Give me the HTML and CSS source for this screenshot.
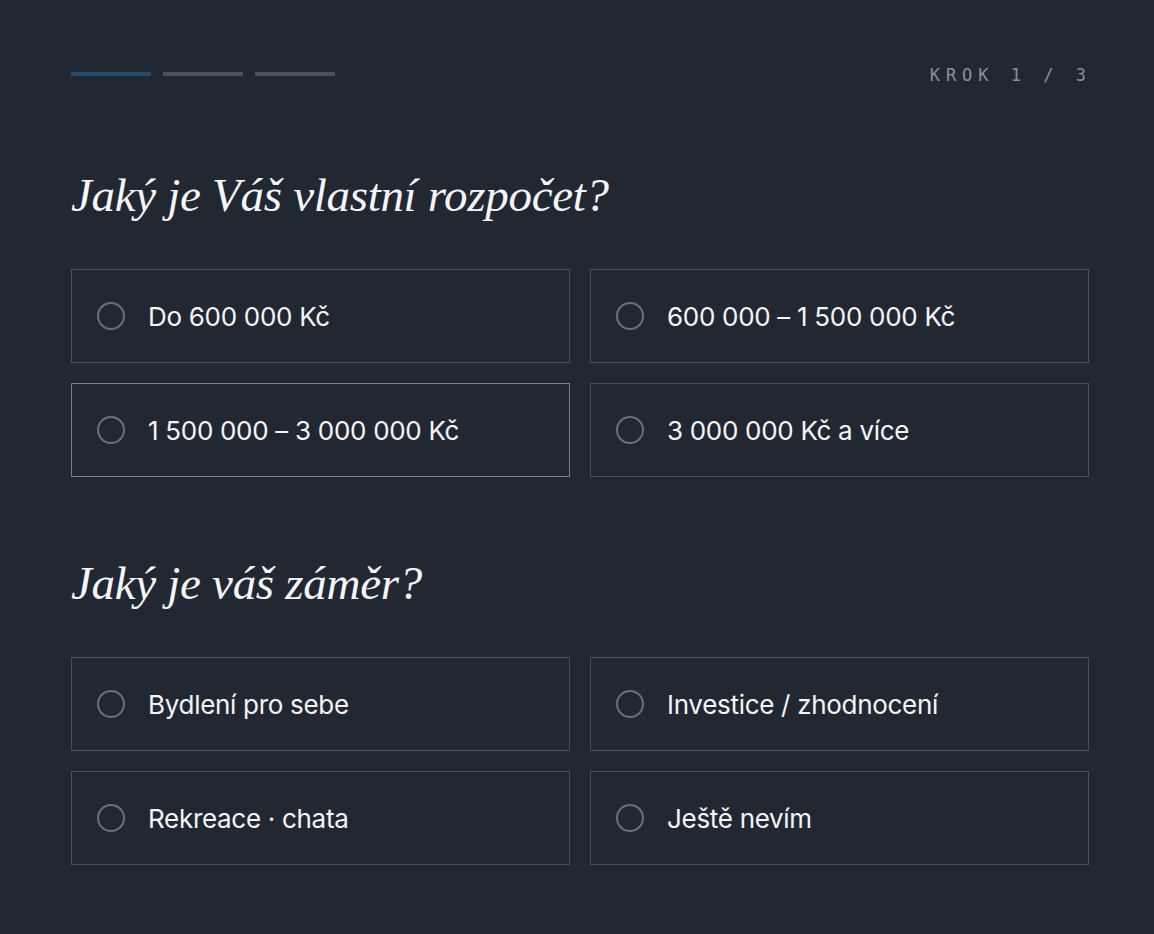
FILE: index.html
```html
<!DOCTYPE html>
<html lang="cs">
<head>
    <meta charset="UTF-8">
    <meta name="viewport" content="width=device-width, initial-scale=1.0">
    <title>Poptávka</title>
    <link rel="stylesheet" href="styles.css">
</head>
<body>
    <div class="quiz">
        <div class="quiz-top">
            <div class="steps">
                <span class="step active"></span>
                <span class="step"></span>
                <span class="step"></span>
            </div>
            <span class="step-label">KROK 1 / 3</span>
        </div>

        <section class="question">
            <h2>Jaký je Váš vlastní rozpočet?</h2>
            <div class="options">
                <label class="option"><span class="radio"></span>Do 600 000 Kč</label>
                <label class="option"><span class="radio"></span>600 000 – 1 500 000 Kč</label>
                <label class="option hover"><span class="radio"></span>1 500 000 – 3 000 000 Kč</label>
                <label class="option"><span class="radio"></span>3 000 000 Kč a více</label>
            </div>
        </section>

        <section class="question">
            <h2>Jaký je váš záměr?</h2>
            <div class="options">
                <label class="option"><span class="radio"></span>Bydlení pro sebe</label>
                <label class="option"><span class="radio"></span>Investice / zhodnocení</label>
                <label class="option"><span class="radio"></span>Rekreace · chata</label>
                <label class="option"><span class="radio"></span>Ještě nevím</label>
            </div>
        </section>
    </div>
</body>
</html>
```

FILE: styles.css
```css
:root {
    --color-bg: #222831;
    --color-line: #4b5159;
    --color-line-hover: #7a7f87;
    --color-accent: #264b6d;
    --color-text: #f4f5f7;
    --color-muted: #8b9098;
}

* {
    margin: 0;
    padding: 0;
    box-sizing: border-box;
}

body {
    background: var(--color-bg);
    color: var(--color-text);
    font-family: Inter, "Noto Sans", sans-serif;
}

.quiz {
    padding: 72px 65px 40px 71px;
}

.quiz-top {
    display: flex;
    justify-content: space-between;
    align-items: center;
    height: 4px;
}

.steps {
    display: flex;
    gap: 12px;
}

.step {
    display: block;
    width: 80px;
    height: 4px;
    background: var(--color-line);
}

.step.active {
    background: var(--color-accent);
}

.step-label {
    font-family: "DejaVu Sans Mono", "Liberation Mono", monospace;
    font-size: 17px;
    letter-spacing: 6px;
    margin-right: -3px;
    padding-top: 2px;
    color: var(--color-muted);
}

.question h2 {
    font-family: "Liberation Serif", serif;
    font-style: italic;
    font-weight: 400;
    font-size: 47px;
    line-height: 60px;
    letter-spacing: -0.3px;
    margin: 89px 0 44px;
}

.question + .question h2 {
    margin-top: 76px;
}

.options {
    display: grid;
    grid-template-columns: 1fr 1fr;
    gap: 20px 20px;
}

.option {
    display: flex;
    align-items: center;
    gap: 23px;
    height: 94px;
    padding: 0 25px;
    border: 1px solid var(--color-line);
    font-size: 26px;
    letter-spacing: -0.3px;
    cursor: pointer;
}

.option.hover {
    border-color: var(--color-line-hover);
}

.radio {
    width: 28px;
    height: 28px;
    border: 2px solid #6b7079;
    border-radius: 50%;
    flex-shrink: 0;
}
```
